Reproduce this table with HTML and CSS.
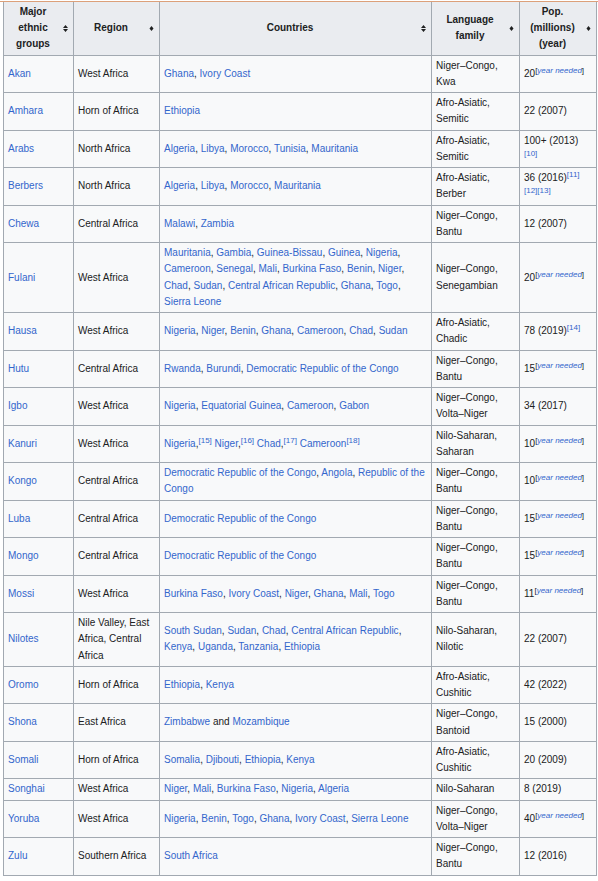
FILE: index.html
```html
<!DOCTYPE html>
<html lang="en">
<head>
<meta charset="utf-8">
<title>Major ethnic groups</title>
<link rel="stylesheet" href="styles.css">
</head>
<body>
<div class="page">
  <div class="rule"></div>
  <table class="wikitable">
    <colgroup>
      <col class="c1"><col class="c2"><col class="c3"><col class="c4"><col class="c5">
    </colgroup>
    <thead>
      <tr>
        <th><span class="th-text">Major ethnic groups</span><svg class="sort" width="5" height="7" viewBox="0 0 5 7"><path d="M2.5 0L5 3H0Z M0 4H5L2.5 7Z"/></svg></th>
        <th><span class="th-text">Region</span><svg class="sort" width="5" height="7" viewBox="0 0 5 7"><path d="M2.5 1L4.5 3.5L2.5 6L0.5 3.5Z"/></svg></th>
        <th><span class="th-text">Countries</span><svg class="sort" width="5" height="7" viewBox="0 0 5 7"><path d="M2.5 0L5 3H0Z M0 4H5L2.5 7Z"/></svg></th>
        <th><span class="th-text">Language family</span><svg class="sort" width="5" height="7" viewBox="0 0 5 7"><path d="M2.5 1L4.5 3.5L2.5 6L0.5 3.5Z"/></svg></th>
        <th><span class="th-text">Pop. (millions) (year)</span><svg class="sort" width="5" height="7" viewBox="0 0 5 7"><path d="M2.5 1L4.5 3.5L2.5 6L0.5 3.5Z"/></svg></th>
      </tr>
    </thead>
    <tbody>
      <tr><td><a href="#">Akan</a></td><td>West Africa</td><td><a href="#">Ghana</a>, <a href="#">Ivory Coast</a></td><td>Niger–Congo, Kwa</td><td>20<sup class="yn">[<a href="#">year needed</a>]</sup></td></tr>
      <tr><td><a href="#">Amhara</a></td><td>Horn of Africa</td><td><a href="#">Ethiopia</a></td><td>Afro-Asiatic, Semitic</td><td>22 (2007)</td></tr>
      <tr><td><a href="#">Arabs</a></td><td>North Africa</td><td><a href="#">Algeria</a>, <a href="#">Libya</a>, <a href="#">Morocco</a>, <a href="#">Tunisia</a>, <a href="#">Mauritania</a></td><td>Afro-Asiatic, Semitic</td><td>100+ (2013)<br><sup class="ref"><a href="#">[10]</a></sup></td></tr>
      <tr><td><a href="#">Berbers</a></td><td>North Africa</td><td><a href="#">Algeria</a>, <a href="#">Libya</a>, <a href="#">Morocco</a>, <a href="#">Mauritania</a></td><td>Afro-Asiatic, Berber</td><td>36 (2016)<sup class="ref"><a href="#">[11]</a></sup><br><sup class="ref"><a href="#">[12]</a></sup><sup class="ref"><a href="#">[13]</a></sup></td></tr>
      <tr><td><a href="#">Chewa</a></td><td>Central Africa</td><td><a href="#">Malawi</a>, <a href="#">Zambia</a></td><td>Niger–Congo, Bantu</td><td>12 (2007)</td></tr>
      <tr><td><a href="#">Fulani</a></td><td>West Africa</td><td><a href="#">Mauritania</a>, <a href="#">Gambia</a>, <a href="#">Guinea-Bissau</a>, <a href="#">Guinea</a>, <a href="#">Nigeria</a>, <a href="#">Cameroon</a>, <a href="#">Senegal</a>, <a href="#">Mali</a>, <a href="#">Burkina Faso</a>, <a href="#">Benin</a>, <a href="#">Niger</a>, <a href="#">Chad</a>, <a href="#">Sudan</a>, <a href="#">Central African Republic</a>, <a href="#">Ghana</a>, <a href="#">Togo</a>, <a href="#">Sierra Leone</a></td><td>Niger–Congo, Senegambian</td><td>20<sup class="yn">[<a href="#">year needed</a>]</sup></td></tr>
      <tr><td><a href="#">Hausa</a></td><td>West Africa</td><td><a href="#">Nigeria</a>, <a href="#">Niger</a>, <a href="#">Benin</a>, <a href="#">Ghana</a>, <a href="#">Cameroon</a>, <a href="#">Chad</a>, <a href="#">Sudan</a></td><td>Afro-Asiatic, Chadic</td><td>78 (2019)<sup class="ref"><a href="#">[14]</a></sup></td></tr>
      <tr><td><a href="#">Hutu</a></td><td>Central Africa</td><td><a href="#">Rwanda</a>, <a href="#">Burundi</a>, <a href="#">Democratic Republic of the Congo</a></td><td>Niger–Congo, Bantu</td><td>15<sup class="yn">[<a href="#">year needed</a>]</sup></td></tr>
      <tr><td><a href="#">Igbo</a></td><td>West Africa</td><td><a href="#">Nigeria</a>, <a href="#">Equatorial Guinea</a>, <a href="#">Cameroon</a>, <a href="#">Gabon</a></td><td>Niger–Congo, Volta–Niger</td><td>34 (2017)</td></tr>
      <tr><td><a href="#">Kanuri</a></td><td>West Africa</td><td><a href="#">Nigeria</a>,<sup class="ref"><a href="#">[15]</a></sup> <a href="#">Niger</a>,<sup class="ref"><a href="#">[16]</a></sup> <a href="#">Chad</a>,<sup class="ref"><a href="#">[17]</a></sup> <a href="#">Cameroon</a><sup class="ref"><a href="#">[18]</a></sup></td><td>Nilo-Saharan, Saharan</td><td>10<sup class="yn">[<a href="#">year needed</a>]</sup></td></tr>
      <tr><td><a href="#">Kongo</a></td><td>Central Africa</td><td><a href="#">Democratic Republic of the Congo</a>, <a href="#">Angola</a>, <a href="#">Republic of the Congo</a></td><td>Niger–Congo, Bantu</td><td>10<sup class="yn">[<a href="#">year needed</a>]</sup></td></tr>
      <tr><td><a href="#">Luba</a></td><td>Central Africa</td><td><a href="#">Democratic Republic of the Congo</a></td><td>Niger–Congo, Bantu</td><td>15<sup class="yn">[<a href="#">year needed</a>]</sup></td></tr>
      <tr><td><a href="#">Mongo</a></td><td>Central Africa</td><td><a href="#">Democratic Republic of the Congo</a></td><td>Niger–Congo, Bantu</td><td>15<sup class="yn">[<a href="#">year needed</a>]</sup></td></tr>
      <tr><td><a href="#">Mossi</a></td><td>West Africa</td><td><a href="#">Burkina Faso</a>, <a href="#">Ivory Coast</a>, <a href="#">Niger</a>, <a href="#">Ghana</a>, <a href="#">Mali</a>, <a href="#">Togo</a></td><td>Niger–Congo, Bantu</td><td>11<sup class="yn">[<a href="#">year needed</a>]</sup></td></tr>
      <tr><td><a href="#">Nilotes</a></td><td>Nile Valley, East Africa, Central Africa</td><td><a href="#">South Sudan</a>, <a href="#">Sudan</a>, <a href="#">Chad</a>, <a href="#">Central African Republic</a>, <a href="#">Kenya</a>, <a href="#">Uganda</a>, <a href="#">Tanzania</a>, <a href="#">Ethiopia</a></td><td>Nilo-Saharan, Nilotic</td><td>22 (2007)</td></tr>
      <tr><td><a href="#">Oromo</a></td><td>Horn of Africa</td><td><a href="#">Ethiopia</a>, <a href="#">Kenya</a></td><td>Afro-Asiatic, Cushitic</td><td>42 (2022)</td></tr>
      <tr><td><a href="#">Shona</a></td><td>East Africa</td><td><a href="#">Zimbabwe</a> and <a href="#">Mozambique</a></td><td>Niger–Congo, Bantoid</td><td>15 (2000)</td></tr>
      <tr><td><a href="#">Somali</a></td><td>Horn of Africa</td><td><a href="#">Somalia</a>, <a href="#">Djibouti</a>, <a href="#">Ethiopia</a>, <a href="#">Kenya</a></td><td>Afro-Asiatic, Cushitic</td><td>20 (2009)</td></tr>
      <tr><td><a href="#">Songhai</a></td><td>West Africa</td><td><a href="#">Niger</a>, <a href="#">Mali</a>, <a href="#">Burkina Faso</a>, <a href="#">Nigeria</a>, <a href="#">Algeria</a></td><td>Nilo-Saharan</td><td>8 (2019)</td></tr>
      <tr><td><a href="#">Yoruba</a></td><td>West Africa</td><td><a href="#">Nigeria</a>, <a href="#">Benin</a>, <a href="#">Togo</a>, <a href="#">Ghana</a>, <a href="#">Ivory Coast</a>, <a href="#">Sierra Leone</a></td><td>Niger–Congo, Volta–Niger</td><td>40<sup class="yn">[<a href="#">year needed</a>]</sup></td></tr>
      <tr><td><a href="#">Zulu</a></td><td>Southern Africa</td><td><a href="#">South Africa</a></td><td>Niger–Congo, Bantu</td><td>12 (2016)</td></tr>
    </tbody>
  </table>
</div>
</body>
</html>
```
FILE: styles.css
```css
html, body {
  margin: 0;
  padding: 0;
  background: #ffffff;
}

.page {
  padding-top: 1px;
  font-family: "Liberation Sans", Arial, sans-serif;
  font-size: 10px;
  color: #202122;
}

.rule {
  height: 0;
  border-top: 1px solid #dca07a;
}

.wikitable {
  margin-left: 3px;
  width: 593px;
  table-layout: fixed;
  border-collapse: collapse;
  background: #f8f9fa;
  border: 1px solid #a2a9b1;
  border-top: none;
  line-height: 16.2px;
}

.c1 { width: 70px; }
.c2 { width: 86px; }
.c3 { width: 272px; }
.c4 { width: 88px; }
.c5 { width: 77px; }

.wikitable th,
.wikitable td {
  border: 1px solid #a2a9b1;
  padding: 2.05px 4px;
  vertical-align: middle;
}

.wikitable thead th {
  border-top: none;
}

.wikitable th {
  background: #eaecf0;
  font-weight: bold;
  text-align: center;
  padding-right: 15px;
  position: relative;
}

.th-text {
  display: block;
}

.sort {
  position: absolute;
  right: 5px;
  top: 50%;
  margin-top: -3px;
  fill: #202122;
}

.wikitable td {
  text-align: left;
}

a {
  color: #3366cc;
  text-decoration: none;
}

sup {
  font-size: 80%;
  line-height: 1;
  vertical-align: super;
}

sup.yn a {
  font-style: italic;
}

sup.yn {
  color: #202122;
}
```
